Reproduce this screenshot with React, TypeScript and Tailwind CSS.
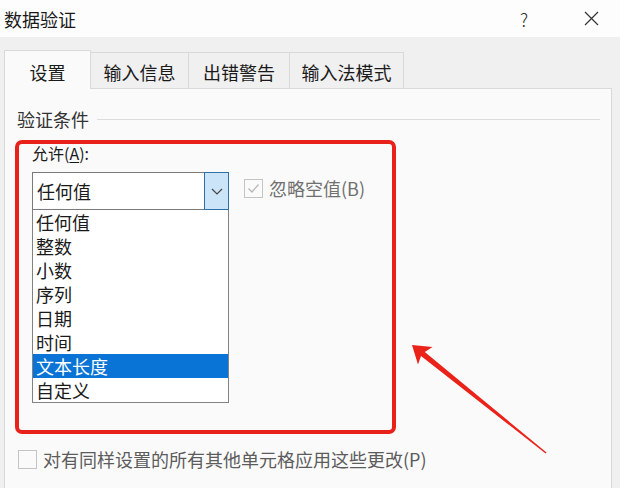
const items = ['任何值', '整数', '小数', '序列', '日期', '时间', '文本长度', '自定义'];

function Tab({ label, width }: { label: string; width: string }) {
  return (
    <div
      className={`${width} h-[36px] pt-[3px] border-t border-r border-[#d9d9d9] bg-[#f0f0f0] flex items-center justify-center text-[18px] leading-[22px]`}
    >
      {label}
    </div>
  );
}

export default function App() {
  return (
    <div className="relative w-[620px] h-[488px] overflow-hidden bg-[#f0f0f0] text-[#1a1a1a] font-['Noto_Sans_CJK_SC','Noto_Sans',sans-serif]">
      {/* title bar */}
      <div className="h-[37px] bg-[#fdfdfd] flex items-center pl-[4px] pr-[21px]">
        <span className="text-[18px] leading-[24px] pt-[1px]">数据验证</span>
        <span className="ml-auto text-[18px] leading-[24px] font-light text-[#333]">?</span>
        <svg className="ml-[56px]" width="15" height="15" viewBox="0 0 15 15">
          <path d="M1 1 L14 14 M14 1 L1 14" stroke="#333" strokeWidth="1.2" fill="none" />
        </svg>
      </div>

      {/* tabs */}
      <div className="flex items-end pl-[4px] pt-[13px]">
        <div className="relative z-10 -mb-px w-[87px] h-[39px] pt-[4px] border border-b-0 border-[#d9d9d9] bg-[#fafafa] flex items-center justify-center text-[18px] leading-[22px]">
          设置
        </div>
        <Tab label="输入信息" width="w-[98px]" />
        <Tab label="出错警告" width="w-[101px]" />
        <Tab label="输入法模式" width="w-[114px]" />
      </div>

      {/* panel */}
      <div className="ml-[4px] w-[608px] h-[420px] border border-[#d9d9d9] bg-[#fafafa]">
        <div className="mt-[20px] h-[20px] flex items-center pl-[12px] pr-[11px]">
          <span className="text-[18px] leading-[20px] text-[#333]">验证条件</span>
          <div className="ml-[8px] flex-1 h-px bg-[#dcdcdc]" />
        </div>

        <div className="pl-[27px] mt-[14px] text-[16px] leading-[20px]">
          允许(<span className="underline underline-offset-2">A</span>):
        </div>

        <div className="pl-[27px] mt-[9px] flex items-start">
          <div className="w-[197px]">
            <div className="flex h-[38px]">
              <div className="flex-1 border border-r-0 border-[#7a7a7a] bg-white flex items-center pl-[4px] text-[18px] leading-[24px]">
                任何值
              </div>
              <div className="w-[25px] border border-[#2f6fa8] bg-[#cce4f7] flex items-center justify-center">
                <svg width="12" height="7" viewBox="0 0 12 7">
                  <path d="M1 1 L6 6 L11 1" stroke="#444" strokeWidth="1.2" fill="none" />
                </svg>
              </div>
            </div>
            <div className="border border-t-0 border-[#828282] bg-white">
              {items.map((it) => (
                <div
                  key={it}
                  className={`h-[24px] pl-[3px] text-[18px] leading-[24px] ${
                    it === '文本长度' ? 'bg-[#0a74d6] text-white' : ''
                  }`}
                >
                  {it}
                </div>
              ))}
            </div>
          </div>

          <div className="ml-[15px] mt-[5px] flex items-center">
            <div className="w-[19px] h-[19px] border border-[#c4c4c4] bg-[#fafafa] flex items-center justify-center">
              <svg width="15" height="15" viewBox="0 0 15 15">
                <path d="M2.5 7.5 L6 11 L12.5 3.5" stroke="#b5b5b5" strokeWidth="1.2" fill="none" />
              </svg>
            </div>
            <span className="ml-[6px] text-[18px] leading-[22px] text-[#707070]">忽略空值(B)</span>
          </div>
        </div>

        <div className="pl-[13px] mt-[45px] flex items-center">
          <div className="w-[19px] h-[19px] border border-[#c4c4c4] bg-[#fafafa]" />
          <span className="ml-[6px] text-[18px] leading-[22px] text-[#5c5c5c]">
            对有同样设置的所有其他单元格应用这些更改(P)
          </span>
        </div>
      </div>

      {/* annotation: red frame */}
      <div className="pointer-events-none absolute left-[15px] top-[140px] w-[381px] h-[294px] border-4 border-[#e8221b] rounded-[7px]" />

      {/* annotation: red arrow */}
      <svg className="pointer-events-none absolute left-0 top-0" width="620" height="488" viewBox="0 0 620 488">
        <polygon
          points="412,345 432.5,347 424.8,352 546.5,452.4 545.6,453.5 421,356 418,364.5"
          fill="#ea2219"
        />
      </svg>
    </div>
  );
}
